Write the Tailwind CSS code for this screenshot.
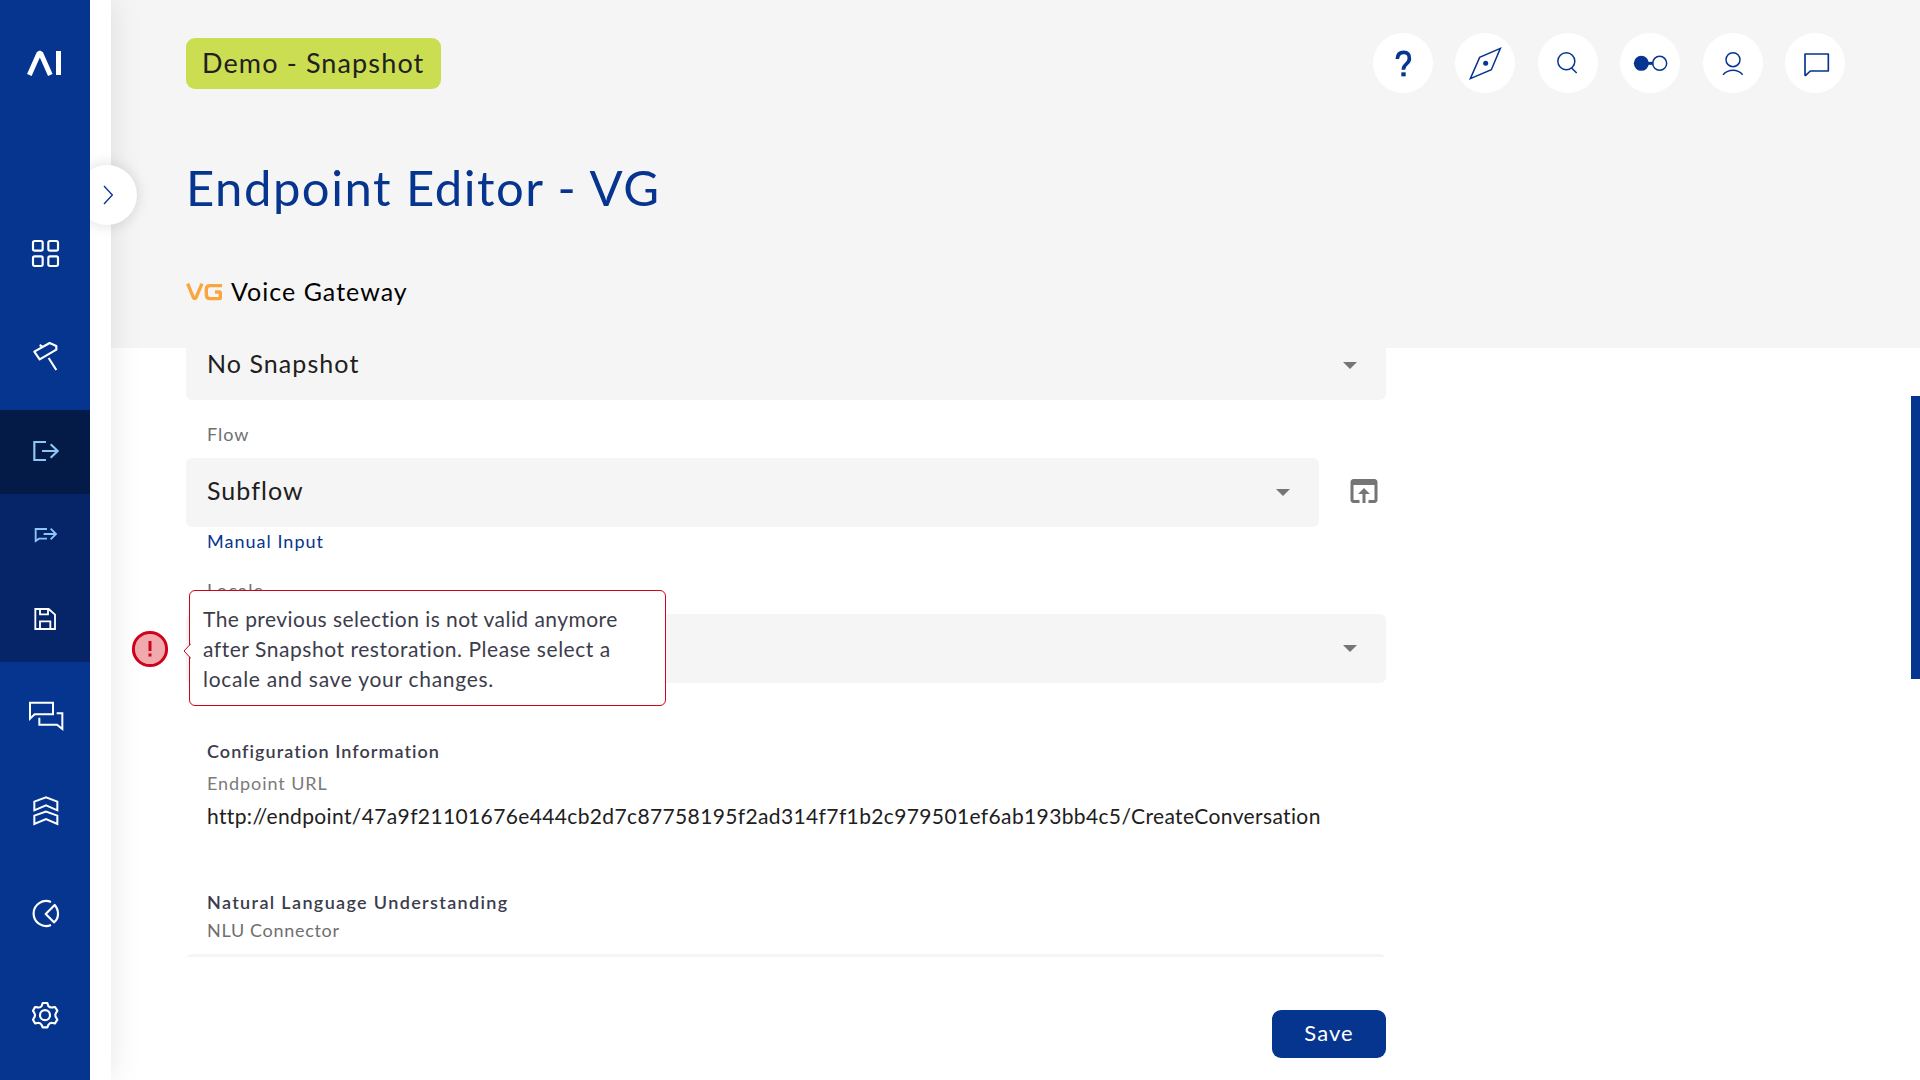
<!DOCTYPE html>
<html lang="en">
<head>
<meta charset="utf-8">
<title>Endpoint Editor - VG</title>
<script src="https://cdn.jsdelivr.net/npm/@tailwindcss/browser@4"></script>
</head>
<body class="flex h-screen w-screen overflow-hidden bg-white font-['Lato','Open_Sans',sans-serif] text-[#202020]">

<!-- Primary navigation -->
<aside class="relative z-20 flex h-full w-[111px] shrink-0 bg-white shadow-[0_0_30px_rgba(0,0,0,0.1)]">
  <nav class="relative z-10 flex h-full w-[90px] flex-col bg-[#06358f]">
    <a class="h-[202px]"><svg class="block h-full w-full" viewBox="0 0 270 606" fill="none" stroke="#fff" stroke-width="15"><path d="M88 225L117 160H122L151 225" stroke-linejoin="bevel"/><path d="M175.500 153V225"/></svg></a>
    <a class="h-[104px]"><svg class="block h-full w-full" viewBox="0 606 270 312" fill="none" stroke="#fff" stroke-width="6.500"><rect x="99" y="723" width="29" height="29" rx="5"/><rect x="145" y="723" width="29" height="29" rx="5"/><rect x="99" y="769" width="29" height="29" rx="5"/><rect x="145" y="769" width="29" height="29" rx="5"/></svg></a>
    <a class="h-[104px]"><svg class="block h-full w-full" viewBox="0 258 270 312" fill="none" stroke="#fff" stroke-width="6.500" stroke-linejoin="round"><path d="M103 395L149 369L169 378V389L119 418ZM146 414L169 450M119 375L127 380"/></svg></a>
    <a class="h-[84px] bg-[#041a47]"><svg class="block h-full w-full" viewBox="0 570 270 252" fill="none" stroke="#8cc8f5" stroke-width="6.500"><path d="M138 666H103V720H138M126 693H174M152 673L173 693L152 713"/></svg></a>
    <a class="h-[84px] bg-[#052568]"><svg class="block h-full w-full" viewBox="0 12 270 252" fill="none" stroke="#8cc8f5" stroke-width="5.500"><path d="M141 117H107V153L117 146H141M131 132H168M152 116L168 132L152 148"/></svg></a>
    <a class="h-[84px] bg-[#052568]"><svg class="block h-full w-full" viewBox="0 264 270 252" fill="none" stroke="#fff" stroke-width="5.500"><path d="M106 357H146L165 374V417H106ZM120 357V373H144V357M120 417V394H151V417"/></svg></a>
    <a class="h-[104px]"><svg class="block h-full w-full" viewBox="0 516 270 312" fill="none" stroke="#fff" stroke-width="6"><path d="M90 638H159V673H104L90 686ZM170 670H187V717L171 704H118V683"/></svg></a>
    <a class="h-[94px]"><svg class="block h-full w-full" viewBox="0 18 270 282" fill="none" stroke="#fff" stroke-width="6"><path d="M103 125L138 112L172 125V151L138 136L103 151ZM103 167L138 155L172 167V192L138 177L103 192Z"/></svg></a>
    <a class="h-[108px]"><svg class="block h-full w-full" viewBox="0 300 270 324" fill="none" stroke="#fff" stroke-width="6.500" stroke-linejoin="round"><path d="M153 426A37.500 37.500 0 1 0 153 495M137 462L164 435Q174 446 174 462T162 487Z"/></svg></a>
    <a class="h-[112px]"><svg class="block h-full w-full" viewBox="0 624 270 336" fill="none" stroke="#fff" stroke-width="6.500" stroke-linejoin="round"><circle cx="135" cy="765.500" r="15"/><path d="M128 729H142L145 738Q150 744 158 742L165 741L172 752L168 759Q164 766 168 772L172 779L165 790L157 789Q149 788 145 795L142 802H128L125 795Q121 788 113 789L105 790L99 779L103 772Q107 766 103 759L99 752L105 741L113 742Q121 744 125 738Z"/></svg></a>
  </nav>
  <button class="absolute left-[77px] top-[165px] size-[60px] rounded-full bg-white shadow-[0_0_15px_rgba(0,0,0,0.14)]"></button>
  <div class="absolute left-[90px] top-[165px] h-[60px] w-[46px] rounded-r-full"><svg class="h-[60px] w-[46px]" viewBox="270 495 138 180" fill="none" stroke="#06358f" stroke-width="4"><path d="M312 558L337 585L312 612"/></svg></div>
</aside>

<main class="relative flex min-w-0 flex-1 flex-col">
  <header class="h-[348px] shrink-0 bg-[#f5f5f5] pl-[75px]">
    <div class="flex h-[126px] items-center justify-between pr-[75px]">
      <div class="flex h-[51px] w-[255px] items-center rounded-[9px] bg-[#cbde51] pt-px pl-4 text-[27px] tracking-[1.130px] whitespace-nowrap">Demo - Snapshot</div>
      <div class="flex gap-[22.400px]">
        <button class="size-[60px] rounded-full bg-white"><svg viewBox="69 69 180 180" fill="none" stroke="#06358f" stroke-width="11"><path d="M142 147Q143 127 161 127T178 146Q178 154 169 162Q160 170 160 179"/><rect x="154" y="187" width="13" height="12" fill="#06358f" stroke="none"/></svg></button>
        <button class="size-[60px] rounded-full bg-white"><svg viewBox="315 69 180 180" fill="none" stroke="#06358f" stroke-width="4.500"><path d="M451 115L389 142L361 206L424 179Z"/><circle cx="407" cy="160" r="7.500" fill="#06358f" stroke="none"/></svg></button>
        <button class="size-[60px] rounded-full bg-white"><svg viewBox="564 69 180 180" fill="none" stroke="#06358f" stroke-width="4.500"><circle cx="649" cy="154" r="25.500"/><path d="M664 173L680 189"/></svg></button>
        <button class="size-[60px] rounded-full bg-white"><svg viewBox="810 69 180 180" fill="none" stroke="#06358f" stroke-width="4.500"><circle cx="874" cy="160" r="22.500" fill="#06358f" stroke="none"/><path d="M894 160H910" stroke-width="9"/><circle cx="929" cy="160" r="21"/></svg></button>
        <button class="size-[60px] rounded-full bg-white"><svg viewBox="1059 69 180 180" fill="none" stroke="#06358f" stroke-width="4.500"><circle cx="1149" cy="149" r="21"/><path d="M1119 194Q1132 181 1149 181T1178 194"/></svg></button>
        <button class="size-[60px] rounded-full bg-white"><svg viewBox="1305 69 180 180" fill="none" stroke="#06358f" stroke-width="5" stroke-linejoin="round"><path d="M1365 132H1435V183H1381L1367 196H1365Z"/></svg></button>
      </div>
    </div>
    <h1 class="mt-[31px] text-[49px] leading-[60px] tracking-[1.500px] text-[#06358f]">Endpoint Editor - VG</h1>
    <div class="mt-[60px] flex h-[30px] items-center">
      <svg class="h-[30px] w-[45px]" viewBox="48 411 135 90" fill="none" stroke="#f9a640" stroke-width="10" stroke-linejoin="bevel"><path d="M53 431L71 475H77L96 431"/><path d="M156 437H120Q109 437 109 448V465Q109 476 120 476H151V456H135" /></svg>
      <span class="pb-0.5 text-[25px] leading-[30px] tracking-[1.020px] text-black">Voice Gateway</span>
    </div>
  </header>

  <section class="h-[609px] w-[1300px] shrink-0 overflow-hidden pl-[75px]">
    <div class="-mt-[17px] flex w-[1200px] flex-col">
      <div class="flex h-[69px] items-center justify-between rounded-md bg-[#f5f5f5] pr-[29px] pb-[3px] pl-[21px] text-[25px] tracking-[1.070px]">No Snapshot<svg class="mt-[3px] h-[7px] w-[14px]" viewBox="0 0 14 7"><path d="M0 0H14L7 7Z" fill="#757575"/></svg></div>

      <label class="mt-[22px] pl-[21px] text-[18px] leading-6 tracking-[1px] text-[#6f6f6f]">Flow</label>
      <div class="mt-3 flex items-center">
        <div class="flex h-[69px] w-[1133px] items-center justify-between rounded-md bg-[#f5f5f5] pr-[29px] pb-[3px] pl-[21px] text-[25px] tracking-[1.050px]">Subflow<svg class="mt-[3px] h-[7px] w-[14px]" viewBox="0 0 14 7"><path d="M0 0H14L7 7Z" fill="#757575"/></svg></div>
        <svg class="mb-[3px] ml-[27px] size-9" viewBox="0 0 24 24" fill="#757575"><path d="M19 4H5c-1.110 0-2 .9-2 2v12c0 1.100.89 2 2 2h4v-2H5V8h14v10h-4v2h4c1.100 0 2-.9 2-2V6c0-1.100-.9-2-2-2zm-7 6l-4 4h3v6h2v-6h3l-4-4z"/></svg>
      </div>
      <a class="mt-0.5 pl-[21px] text-[18px] leading-6 tracking-[1.020px] text-[#06358f]">Manual Input</a>

      <label class="mt-[25px] pl-[21px] text-[18px] leading-6 tracking-[1.200px] text-[#6f6f6f]">Locale</label>
      <div class="mt-3 flex h-[69px] items-center justify-end rounded-md bg-[#f5f5f5] pr-[29px]"><svg class="h-[7px] w-[14px]" viewBox="0 0 14 7"><path d="M0 0H14L7 7Z" fill="#757575"/></svg></div>

      <h2 class="mt-14 pl-[21px] text-[18px] leading-6 font-semibold tracking-[1.040px] text-[#3c3c4c]">Configuration Information</h2>
      <div class="mt-2 pl-[21px] text-[18px] leading-6 tracking-[0.920px] text-[#7a7a7a]">Endpoint URL</div>
      <div class="mt-[7px] pl-[21px] text-[21px] leading-7 tracking-[0.365px] whitespace-nowrap">http://endpoint/47a9f21101676e444cb2d7c87758195f2ad314f7f1b2c979501ef6ab193bb4c5/CreateConversation</div>

      <h2 class="mt-[60px] pl-[21px] text-[18px] leading-6 font-semibold tracking-[1.350px] text-[#3c3c4c]">Natural Language Understanding</h2>
      <label class="mt-1 pl-[21px] text-[18px] leading-6 tracking-[0.680px] text-[#6f6f6f]">NLU Connector</label>
      <div class="mt-3 h-[69px] rounded-md bg-[#f5f5f5]"></div>
    </div>
  </section>

  <footer class="flex w-[1275px] justify-end pt-[53px]">
    <button class="h-12 w-[114px] rounded-[9px] bg-[#06358f] pb-[3px] text-[22px] tracking-[1.050px] text-white">Save</button>
  </footer>

  <!-- Validation message over the locale field -->
  <svg class="absolute left-[20px] top-[630px] size-[38px]" viewBox="0 0 38 38"><circle cx="19" cy="19" r="16.600" fill="#f0aaae" stroke="#d0021b" stroke-width="3"/><path d="M19 11V21M19 23.500V26.500" stroke="#d0021b" stroke-width="3"/></svg>
  <div class="absolute left-[78px] top-[590px] h-[116px] w-[477px] rounded-md border border-[#d0021b] bg-white pl-[13px] pt-[13px] text-[21px] leading-[30px] whitespace-nowrap text-[#3c3c4c]">
    <p class="tracking-[0.440px]">The previous selection is not valid anymore</p>
    <p class="tracking-[0.540px]">after Snapshot restoration. Please select a</p>
    <p class="tracking-[0.710px]">locale and save your changes.</p>
    <svg class="absolute left-[-7px] top-[52px] h-4 w-2" viewBox="0 0 8 16"><path d="M8 0.500L1 8L8 15.500" fill="#fff" stroke="#d0021b"/></svg>
  </div>

  <!-- Scroll thumb -->
  <div class="absolute top-[396px] right-0 h-[283px] w-[9px] bg-[#06358f]"></div>
</main>
</body>
</html>
